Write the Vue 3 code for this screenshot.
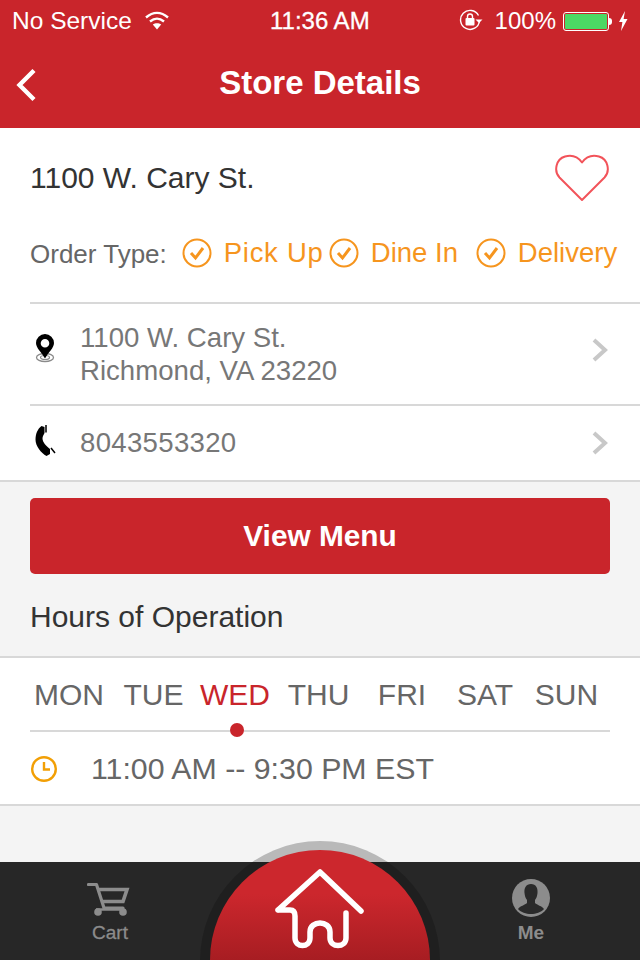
<script setup>
const days = [
  { name: 'MON', active: false },
  { name: 'TUE', active: false },
  { name: 'WED', active: true },
  { name: 'THU', active: false },
  { name: 'FRI', active: false },
  { name: 'SAT', active: false },
  { name: 'SUN', active: false }
];
const orderTypes = ['Pick Up', 'Dine In', 'Delivery'];
</script>

<template>
  <div class="screen">
    <header class="top">
      <div class="status">
        <div class="status-left">
          <span>No Service</span>
          <svg class="wifi" width="26" height="20" viewBox="0 0 26 20">
            <path d="M2 7.5C9 1.5 17 1.5 24 7.5" fill="none" stroke="#fff" stroke-width="2.4" />
            <path d="M6 11.5C10.5 7.8 15.5 7.8 20 11.5" fill="none" stroke="#fff" stroke-width="2.4" />
            <path d="M13 19.5L8.8 14.6C11.2 12.8 14.8 12.8 17.2 14.6Z" fill="#fff" />
          </svg>
        </div>
        <span class="clock">11:36 AM</span>
        <div class="status-right">
          <svg width="26" height="22" viewBox="0 0 26 22">
            <path d="M19.5 6.5A9.5 9.5 0 1 0 20.5 12" fill="none" stroke="#fff" stroke-width="1.4" />
            <path d="M16.5 10.5h7l-3.5 3.5z" fill="#fff" />
            <rect x="6.5" y="9" width="9" height="7.5" rx="1" fill="#fff" />
            <path d="M8.5 9V7.5a2.5 2.5 0 0 1 5 0V9" fill="none" stroke="#fff" stroke-width="1.4" />
          </svg>
          <span class="pct">100%</span>
          <div class="battery"><div class="battery-fill"></div></div>
          <div class="battery-tip"></div>
          <svg class="bolt" width="10" height="20" viewBox="0 0 10 20">
            <path d="M7 0L1 11h3.4L3 20l6.5-12H5.6z" fill="#fff" />
          </svg>
        </div>
      </div>
      <div class="nav">
        <svg class="back" width="24" height="36" viewBox="0 0 24 36">
          <path d="M20 3.5L5.5 18L20 32.5" fill="none" stroke="#fff" stroke-width="4.4" />
        </svg>
        <h1>Store Details</h1>
      </div>
    </header>

    <section class="card first">
      <div class="name-row">
        <span class="store-name">1100 W. Cary St.</span>
        <svg width="54" height="48" viewBox="0 0 54 48">
          <path d="M27 46L4.5 23.5C-1.5 17 1 5 10 2.500C17 0.500 23 3 27 8.500C31 3 37 0.500 44 2.500C53 5 55.500 17 49.500 23.500Z" fill="none" stroke="#f2535a" stroke-width="2" stroke-linejoin="round" />
        </svg>
      </div>
      <div class="order-row">
        <span class="order-label">Order Type:</span>
        <div class="order-types">
          <span v-for="type in orderTypes" :key="type" class="order-type">
            <svg width="30" height="30" viewBox="0 0 30 30">
              <circle cx="15" cy="15" r="13.500" fill="none" stroke="#f6951e" stroke-width="2" />
              <path d="M9 15l4.500 5L21 10" fill="none" stroke="#f6951e" stroke-width="3" />
            </svg>
            {{ type }}
          </span>
        </div>
      </div>
      <div class="info-row address">
        <svg class="info-icon pin" width="20" height="30" viewBox="0 0 20 30">
          <ellipse cx="10" cy="24.500" rx="8.500" ry="4" fill="none" stroke="#8a8a8a" stroke-width="1.300" />
          <ellipse cx="10" cy="24.500" rx="4.500" ry="2" fill="none" stroke="#8a8a8a" stroke-width="1.200" />
          <path fill-rule="evenodd" d="M10 1a9 9 0 0 1 9 9c0 5-5.500 9-9 15.500C6.500 19 1 15 1 10a9 9 0 0 1 9-9zm0 5a4.300 4.300 0 1 0 0 8.600a4.300 4.300 0 0 0 0-8.600z" fill="#000" />
        </svg>
        <div class="info-text">1100 W. Cary St.<br />Richmond, VA 23220</div>
        <svg class="chevron" width="18" height="26" viewBox="0 0 18 26">
          <path d="M3 3l11 10L3 23" fill="none" stroke="#c8c8c8" stroke-width="4" />
        </svg>
      </div>
      <div class="info-row phone">
        <svg class="info-icon handset" width="20" height="32" viewBox="0 -2 20 32">
          <path d="M6.500-1C2.500 2 .5 7 .5 12.500C.5 19 6 26 11.500 29L15 27L15 22C11 19 7.500 15 7.500 11.500C7.500 9.500 8.500 8 9.500 6L9.500 0Z" fill="#000" />
          <path d="M11-2V5.500M16 21L20 26" fill="none" stroke="#000" stroke-width="1.500" />
        </svg>
        <div class="info-text">8043553320</div>
        <svg class="chevron" width="18" height="26" viewBox="0 0 18 26">
          <path d="M3 3l11 10L3 23" fill="none" stroke="#c8c8c8" stroke-width="4" />
        </svg>
      </div>
    </section>

    <div class="menu-area">
      <button class="menu-btn">View Menu</button>
      <h2>Hours of Operation</h2>
    </div>

    <section class="card hours">
      <div class="days">
        <span v-for="day in days" :key="day.name" class="day" :class="{ active: day.active }">{{ day.name }}</span>
      </div>
      <div class="day-line"><span class="dot"></span></div>
      <div class="time-row">
        <svg width="28" height="28" viewBox="0 0 28 28">
          <circle cx="14" cy="14" r="11.800" fill="none" stroke="#f29f05" stroke-width="2.400" />
          <path d="M14 7v7.500h6" fill="none" stroke="#f29f05" stroke-width="2.400" />
        </svg>
        <span>11:00 AM -- 9:30 PM EST</span>
      </div>
    </section>

    <div class="spacer"></div>

    <footer class="tabbar">
      <div class="tab">
        <svg class="cart" width="46" height="36" viewBox="0 0 46 36">
          <path d="M1.500 2.500H9.500L17 26H36" fill="none" stroke="#8c8c8c" stroke-width="3.200" stroke-linecap="round" stroke-linejoin="round" />
          <path d="M11 7.500H40L36 19.500H15" fill="none" stroke="#8c8c8c" stroke-width="3.600" />
          <circle cx="11" cy="30" r="3.800" fill="#8c8c8c" />
          <circle cx="36" cy="30" r="3.800" fill="#8c8c8c" />
          <path d="M9 27.500H37" stroke="#8c8c8c" stroke-width="2.500" />
        </svg>
        <span>Cart</span>
      </div>
      <div class="home-slot">
        <div class="home-ring"></div>
        <div class="home-btn">
          <svg width="90" height="82" viewBox="0 0 90 82">
            <path d="M3 42L45 4L86 43M71 45V70C71 80 55 80 55 70V64C55 52 35 52 35 64V70C35 80 20 80 20 70V48Q20 42 15 42H3" fill="none" stroke="#fff" stroke-width="5.500" stroke-linecap="round" stroke-linejoin="round" />
          </svg>
        </div>
      </div>
      <div class="tab">
        <svg width="38" height="38" viewBox="0 0 38 38">
          <circle cx="19" cy="19" r="19" fill="#8c8c8c" />
          <path d="M19 5c-5 0-7 4-6.500 9c.3 3 1 5 2.500 7v3c-2 2-7 3-9 6c3 3.500 8 5 13 5s10-1.500 13-5c-2-3-7-4-9-6v-3c1.500-2 2.200-4 2.500-7c.5-5-1.500-9-6.500-9z" fill="#2a2a2a" />
        </svg>
        <span>Me</span>
      </div>
    </footer>
  </div>
</template>

<style scoped>
.screen {
  width: 640px;
  height: 960px;
  display: flex;
  flex-direction: column;
  overflow: hidden;
  background: #f4f4f4;
  font-family: "Liberation Sans", Arial, sans-serif;
}

.top {
  background: #c9252b;
  color: #fff;
  height: 128px;
}

.status {
  height: 40px;
  display: flex;
  align-items: center;
  justify-content: space-between;
  position: relative;
  padding: 2px 12px 0;
  box-sizing: border-box;
  font-size: 24px;
}

.status-left {
  display: flex;
  align-items: center;
  gap: 12px;
  font-size: 24.5px;
}

.wifi {
  margin-top: -3px;
}

.clock {
  position: absolute;
  left: 270px;
  top: 7px;
  -webkit-text-stroke: 0.3px #fff;
}

.status-right {
  display: flex;
  align-items: center;
  margin-left: auto;
}

.status-right > svg:first-child {
  margin-top: -2px;
}

.pct {
  margin-left: 10px;
  margin-right: 7px;
}

.battery {
  width: 46px;
  height: 19px;
  border: 1px solid #fff;
  border-radius: 3px;
  padding: 1px;
  box-sizing: border-box;
}

.battery-fill {
  height: 100%;
  background: #4cd964;
  border-radius: 1px;
}

.battery-tip {
  width: 3px;
  height: 7px;
  background: #fff;
  border-radius: 0 3px 3px 0;
}

.bolt {
  margin-left: 6px;
}

.nav {
  height: 88px;
  display: flex;
  align-items: center;
  justify-content: center;
  position: relative;
}

.back {
  position: absolute;
  left: 14px;
  top: 27px;
}

.nav h1 {
  margin: 0 0 2px;
  font-size: 33px;
  font-weight: 700;
}

.card {
  background: #fff;
  border-bottom: 2px solid #d8d8d8;
}

.name-row {
  height: 100px;
  display: flex;
  align-items: center;
  justify-content: space-between;
  padding: 0 31px 0 30px;
}

.store-name {
  font-size: 30px;
  color: #333;
}

.order-row {
  margin-left: 30px;
  display: flex;
  align-items: flex-start;
  border-bottom: 2px solid #d8d8d8;
  font-size: 26px;
  padding-top: 9px;
  height: 65px;
}

.order-label {
  color: #666;
  margin-top: 2px;
  margin-right: 15px;
}

.order-types {
  display: grid;
  grid-template-columns: repeat(3, 147px);
}

.order-type {
  display: flex;
  align-items: center;
  gap: 12px;
  color: #f6951e;
  font-size: 27.5px;
}

.order-type:first-child {
  letter-spacing: 0.7px;
}

.info-row {
  margin-left: 30px;
  display: flex;
  align-items: center;
  padding-right: 31px;
  color: #777;
  font-size: 27.6px;
  line-height: 33px;
}

.address {
  height: 100px;
  border-bottom: 2px solid #d8d8d8;
}

.address .chevron {
  margin-bottom: 8px;
}

.phone {
  height: 74px;
}

.phone .info-text {
  padding-bottom: 2px;
  letter-spacing: 0.3px;
}

.info-icon {
  width: 30px;
  margin-right: 20px;
}

.pin {
  margin-bottom: 12px;
}

.handset {
  margin-bottom: 4px;
  overflow: visible;
}

.info-text {
  flex: 1;
}

.menu-area {
  padding: 16px 30px 0;
  height: 174px;
  box-sizing: border-box;
}

.menu-btn {
  display: block;
  width: 100%;
  height: 76px;
  border: none;
  border-radius: 5px;
  background: #c9252b;
  color: #fff;
  font-family: inherit;
  font-size: 29.8px;
  font-weight: 700;
}

.menu-area h2 {
  margin: 26px 0 0;
  font-size: 30px;
  font-weight: 400;
  color: #333;
}

.hours {
  border-top: 2px solid #d8d8d8;
}

.days {
  height: 72px;
  padding-top: 2px;
  box-sizing: border-box;
  display: grid;
  grid-template-columns: 78px 91px 72px 95px 72px 94px 69px;
  padding-left: 30px;
  align-items: center;
  font-size: 30px;
  color: #666;
}

.day {
  text-align: center;
}

.day.active {
  color: #c9252b;
}

.day-line {
  height: 2px;
  background: #d8d8d8;
  margin-left: 30px;
  margin-right: 30px;
  position: relative;
}

.dot {
  position: absolute;
  left: 200px;
  top: -7px;
  width: 14px;
  height: 14px;
  border-radius: 50%;
  background: #c9252b;
}

.time-row {
  height: 72px;
  display: flex;
  align-items: center;
  padding: 2px 0 0 30px;
  box-sizing: border-box;
  font-size: 30.3px;
  color: #666;
}

.time-row span {
  margin-left: 33px;
}

.spacer {
  flex: 1;
}

.tabbar {
  height: 98px;
  background: #272727;
  display: flex;
  justify-content: space-between;
  padding: 0 68px 0 69px;
  position: relative;
}

.tab {
  width: 82px;
  display: flex;
  flex-direction: column;
  align-items: center;
  padding-top: 17px;
  color: #8c8c8c;
  font-size: 19px;
  font-weight: 700;
  gap: 5px;
}

.cart {
  margin: 3px 0 -1px;
}

.tab:first-child span {
  font-weight: 400;
  -webkit-text-stroke: 0.3px #8c8c8c;
}

.home-slot {
  position: absolute;
  left: 200px;
  top: -21px;
  width: 240px;
  height: 119px;
  overflow: hidden;
}

.home-ring {
  position: absolute;
  inset: 0 0 -121px;
  border-radius: 50%;
  background: linear-gradient(#b9b9b9 0 21px, #1f1f1f 21px);
}

.home-btn {
  position: absolute;
  left: 10px;
  top: 9px;
  width: 220px;
  height: 220px;
  border-radius: 50%;
  background: linear-gradient(#cc272d 20%, #a71d22 50%);
  display: flex;
  justify-content: center;
}

.home-btn svg {
  margin-top: 18px;
}
</style>
